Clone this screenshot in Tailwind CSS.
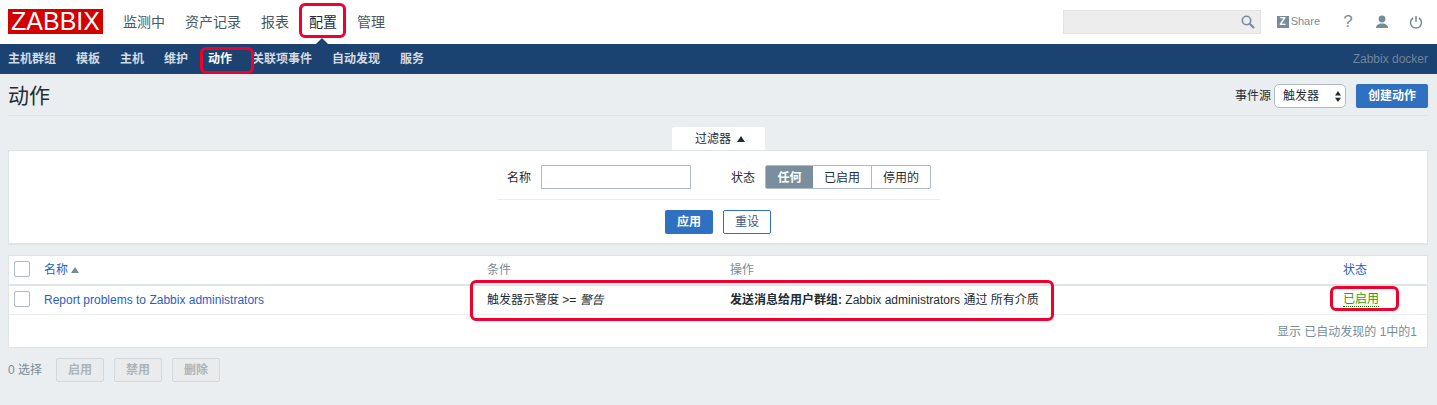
<!DOCTYPE html>
<html lang="zh-CN">
<head>
    <meta charset="UTF-8">
    <title>动作</title>
    <script src="https://cdn.jsdelivr.net/npm/@tailwindcss/browser@4"></script>
</head>
<body class="relative h-[405px] w-[1437px] overflow-hidden bg-[#ebeef0] font-['Liberation_Sans','Noto_Sans_CJK_SC',sans-serif] text-xs text-[#1f2c33]">
    <!-- top nav -->
    <header class="relative flex h-11 items-center bg-white pb-[1px] pl-2 pr-[14px]">
        <div class="flex h-[25px] w-[95px] items-center justify-center bg-[#d40000] text-[25px] leading-none text-white">ZABBIX</div>
        <nav class="ml-[20px] flex gap-5 text-sm text-[#4a5960]">
            <a>监测中</a>
            <a>资产记录</a>
            <a>报表</a>
            <a class="text-[#1f2c33]">配置</a>
            <a>管理</a>
        </nav>
        <div class="absolute bottom-0 left-[316px] h-0 w-0 border-x-[6px] border-b-[6px] border-x-transparent border-b-[#1b4270]"></div>
        <div class="ml-auto flex h-6 w-[198px] items-center justify-end border border-[#e3e3e3] bg-[#ededed] pr-[5px]">
            <svg width="14" height="14" viewBox="0 0 14 14" fill="none" stroke="#768d99" stroke-width="1.6"><circle cx="5.5" cy="5.500" r="4.200"/><path d="M8.700 8.700 13 13" stroke-width="2.200"/></svg>
        </div>
        <div class="ml-4 flex items-center gap-[2px] text-[#768d99]">
            <span class="flex h-3 w-3 items-center justify-center bg-[#768d99] text-[10px] font-bold leading-none text-white">Z</span>
            <span class="text-[11px]">Share</span>
        </div>
        <span class="ml-[23px] w-[10px] text-center text-[17px] leading-none text-[#768d99]">?</span>
        <svg class="ml-[22px]" width="14" height="14" viewBox="0 0 14 14" fill="#768d99"><circle cx="7" cy="4" r="3.400"/><path d="M1 13c0-3 2.500-4.500 6-4.500s6 1.500 6 4.500z"/></svg>
        <svg class="ml-[20px]" width="14" height="14" viewBox="0 0 14 14" fill="none" stroke="#768d99" stroke-width="1.500"><path d="M4 3a5.500 5.500 0 1 0 6 0"/><path d="M7 1v6"/></svg>
    </header>
    <!-- sub nav -->
    <nav class="flex h-[30px] items-center gap-5 bg-[#1b4270] pl-2 pr-[9px] font-bold text-[#d4dbe3]">
        <a>主机群组</a>
        <a>模板</a>
        <a>主机</a>
        <a>维护</a>
        <a class="text-white">动作</a>
        <a>关联项事件</a>
        <a>自动发现</a>
        <a>服务</a>
        <span class="ml-auto font-normal text-[#6f8598]">Zabbix docker</span>
    </nav>
    <main class="pl-2 pr-[9px]">
        <!-- title bar -->
        <div class="flex h-[42px] items-center border-b border-[#dfe4e7] pt-[2px]">
            <h1 class="text-[21px] leading-none text-[#1f2c33]">动作</h1>
            <span class="ml-auto mr-[3px]">事件源</span>
            <div class="relative flex h-6 w-[72px] items-center rounded-[5px] border border-[#acbbc7] bg-white pl-[8px]">
                <span>触发器</span>
                <svg class="absolute right-[4px] top-[6px]" width="6" height="12" viewBox="0 0 6 12" fill="#1f2c33"><path d="M3 0 6 4.500H0zM3 11 0 6.800h6z"/></svg>
            </div>
            <button class="ml-[10px] h-6 w-[72px] rounded-[2px] bg-[#3070c0] font-bold text-white">创建动作</button>
        </div>
        <!-- filter -->
        <div class="mt-[11px] flex justify-center">
            <div class="flex h-[23px] w-[93px] items-center justify-center gap-[6px] rounded-t-[2px] bg-white pl-[4px]">
                <span>过滤器</span>
                <svg width="8" height="6" viewBox="0 0 8 6" fill="#1f2c33"><path d="M4 0 8 6H0z"/></svg>
            </div>
        </div>
        <section class="flex h-[95px] flex-col items-center border border-b-2 border-[#dfe4e7] bg-white pt-[14px]">
            <div class="ml-[1px] flex h-[35px] w-[443px] items-start border-b border-[#ebeef0] pl-[10px]">
                <span class="mr-[10px] leading-[26px]">名称</span>
                <div class="h-6 w-[150px] border border-[#acbbc7] bg-white"></div>
                <span class="ml-10 mr-[10px] leading-[26px]">状态</span>
                <div class="flex h-6 overflow-hidden rounded-[2px] border border-[#acbbc7]">
                    <span class="flex w-[47px] items-center justify-center bg-[#7a8f9d] pt-[1px] font-bold text-white">任何</span>
                    <span class="flex w-[59px] items-center justify-center border-r border-[#acbbc7] pt-[1px]">已启用</span>
                    <span class="flex w-[58px] items-center justify-center pt-[1px]">停用的</span>
                </div>
            </div>
            <div class="mt-[10px] flex gap-[10px]">
                <button class="h-6 w-12 rounded-[2px] bg-[#3070c0] font-bold text-white">应用</button>
                <button class="h-6 w-12 rounded-[2px] border border-[#3070c0] bg-white text-[#3a5a8c]">重设</button>
            </div>
        </section>
        <!-- table -->
        <section class="mt-[10px] h-[93px] border border-[#dfe4e7] bg-white">
            <div class="flex h-[30px] items-center border-b-2 border-[#dfe4e7] pb-[1px]">
                <div class="ml-[5px] mt-[5px] h-4 w-4 self-start rounded-[2px] border border-[#acbbc7]"></div>
                <a class="ml-[14px] flex w-[443px] items-center gap-[3px] text-[#2a5ec2]">名称
                    <svg width="8" height="6" viewBox="0 0 8 6" fill="#768d99"><path d="M4 0 8 6H0z"/></svg>
                </a>
                <span class="w-[243px] text-[#768d99]">条件</span>
                <span class="w-[613px] text-[#768d99]">操作</span>
                <a class="text-[#2a5ec2]">状态</a>
            </div>
            <div class="flex h-[29px] items-center border-b border-[#ebeef0] pb-[1px]">
                <div class="ml-[5px] mt-[5px] h-4 w-4 self-start rounded-[2px] border border-[#acbbc7]"></div>
                <a class="ml-[14px] w-[443px] text-[#2a5ec2]">Report problems to Zabbix administrators</a>
                <span class="w-[243px]">触发器示警度 &gt;= <em>警告</em></span>
                <span class="w-[613px]"><b>发送消息给用户群组:</b> Zabbix administrators 通过 所有介质</span>
                <a class="border-b border-dotted border-[#008f00] leading-[14px] text-[#2f9e00]">已启用</a>
            </div>
            <p class="pr-[10px] pt-[9px] text-right text-[#768d99]">显示 已自动发现的 1中的1</p>
        </section>
        <!-- bulk actions -->
        <div class="mt-[10px] flex items-center gap-[10px] text-[#768d99]">
            <span class="mr-[4px]">0 选择</span>
            <button class="h-6 w-12 rounded-[2px] border border-[#d3d9dd] bg-[#e9ebec] font-bold text-[#acb5ba]">启用</button>
            <button class="h-6 w-12 rounded-[2px] border border-[#d3d9dd] bg-[#e9ebec] font-bold text-[#acb5ba]">禁用</button>
            <button class="h-6 w-12 rounded-[2px] border border-[#d3d9dd] bg-[#e9ebec] font-bold text-[#acb5ba]">删除</button>
        </div>
    </main>
    <!-- red highlight boxes added on the screenshot -->
    <div class="absolute left-[299px] top-[3px] h-[35px] w-[47px] rounded-[6px] border-[3px] border-[#f0002d]"></div>
    <div class="absolute left-[200px] top-[47px] h-[27px] w-[54px] rounded-[6px] border-[3px] border-[#f0002d]"></div>
    <div class="absolute left-[470px] top-[280px] h-[41px] w-[584px] rounded-[6px] border-[3px] border-[#f0002d]"></div>
    <div class="absolute left-[1330px] top-[286px] h-[25px] w-[69px] rounded-[6px] border-[3px] border-[#f0002d]"></div>
</body>
</html>
